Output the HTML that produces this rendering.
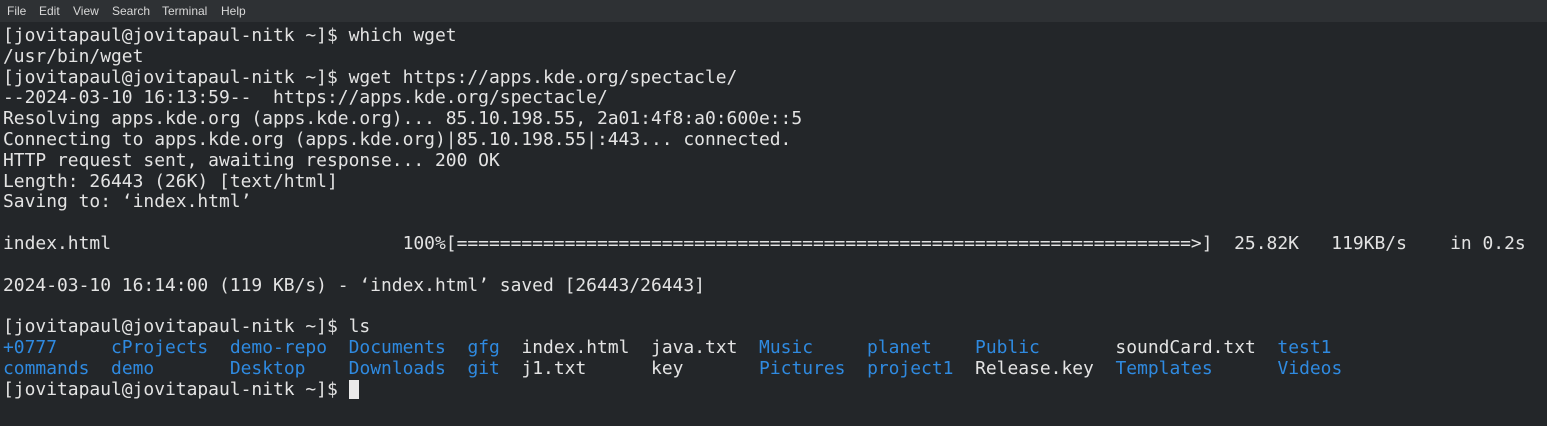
<!DOCTYPE html>
<html><head><meta charset="utf-8"><style>
html,body{margin:0;padding:0;width:1547px;height:426px;overflow:hidden;background:#232629;}
.menu{height:22px;background:#2e3134;color:#d8d8d8;font:12px "Liberation Sans","DejaVu Sans",sans-serif;position:relative;}
.menu span{position:absolute;top:4px;}
pre{margin:0;position:absolute;left:3px;top:26px;font-family:"DejaVu Sans Mono","Liberation Mono",monospace;font-size:17.96px;line-height:20.8px;color:#e3e3e3;}
.b{color:#2f8ae0;}
.cur{display:inline-block;width:10px;height:19px;background:#eaeaea;vertical-align:-4px;}
</style></head><body>
<div class="menu"><span style="left:7px">File</span><span style="left:39px">Edit</span><span style="left:73px">View</span><span style="left:112px">Search</span><span style="left:162px">Terminal</span><span style="left:221px">Help</span></div>
<pre>[jovitapaul@jovitapaul-nitk ~]$ which wget
/usr/bin/wget
[jovitapaul@jovitapaul-nitk ~]$ wget https://apps.kde.org/spectacle/
--2024-03-10 16:13:59--  https://apps.kde.org/spectacle/
Resolving apps.kde.org (apps.kde.org)... 85.10.198.55, 2a01:4f8:a0:600e::5
Connecting to apps.kde.org (apps.kde.org)|85.10.198.55|:443... connected.
HTTP request sent, awaiting response... 200 OK
Length: 26443 (26K) [text/html]
Saving to: ‘index.html’

index.html                           100%[====================================================================>]  25.82K   119KB/s    in 0.2s

2024-03-10 16:14:00 (119 KB/s) - ‘index.html’ saved [26443/26443]

[jovitapaul@jovitapaul-nitk ~]$ ls
<span class="b">+0777</span>     <span class="b">cProjects</span>  <span class="b">demo-repo</span>  <span class="b">Documents</span>  <span class="b">gfg</span>  index.html  java.txt  <span class="b">Music</span>     <span class="b">planet</span>    <span class="b">Public</span>       soundCard.txt  <span class="b">test1</span>
<span class="b">commands</span>  <span class="b">demo</span>       <span class="b">Desktop</span>    <span class="b">Downloads</span>  <span class="b">git</span>  j1.txt      key       <span class="b">Pictures</span>  <span class="b">project1</span>  Release.key  <span class="b">Templates</span>      <span class="b">Videos</span>
[jovitapaul@jovitapaul-nitk ~]$ <span class="cur"></span></pre>
</body></html>
